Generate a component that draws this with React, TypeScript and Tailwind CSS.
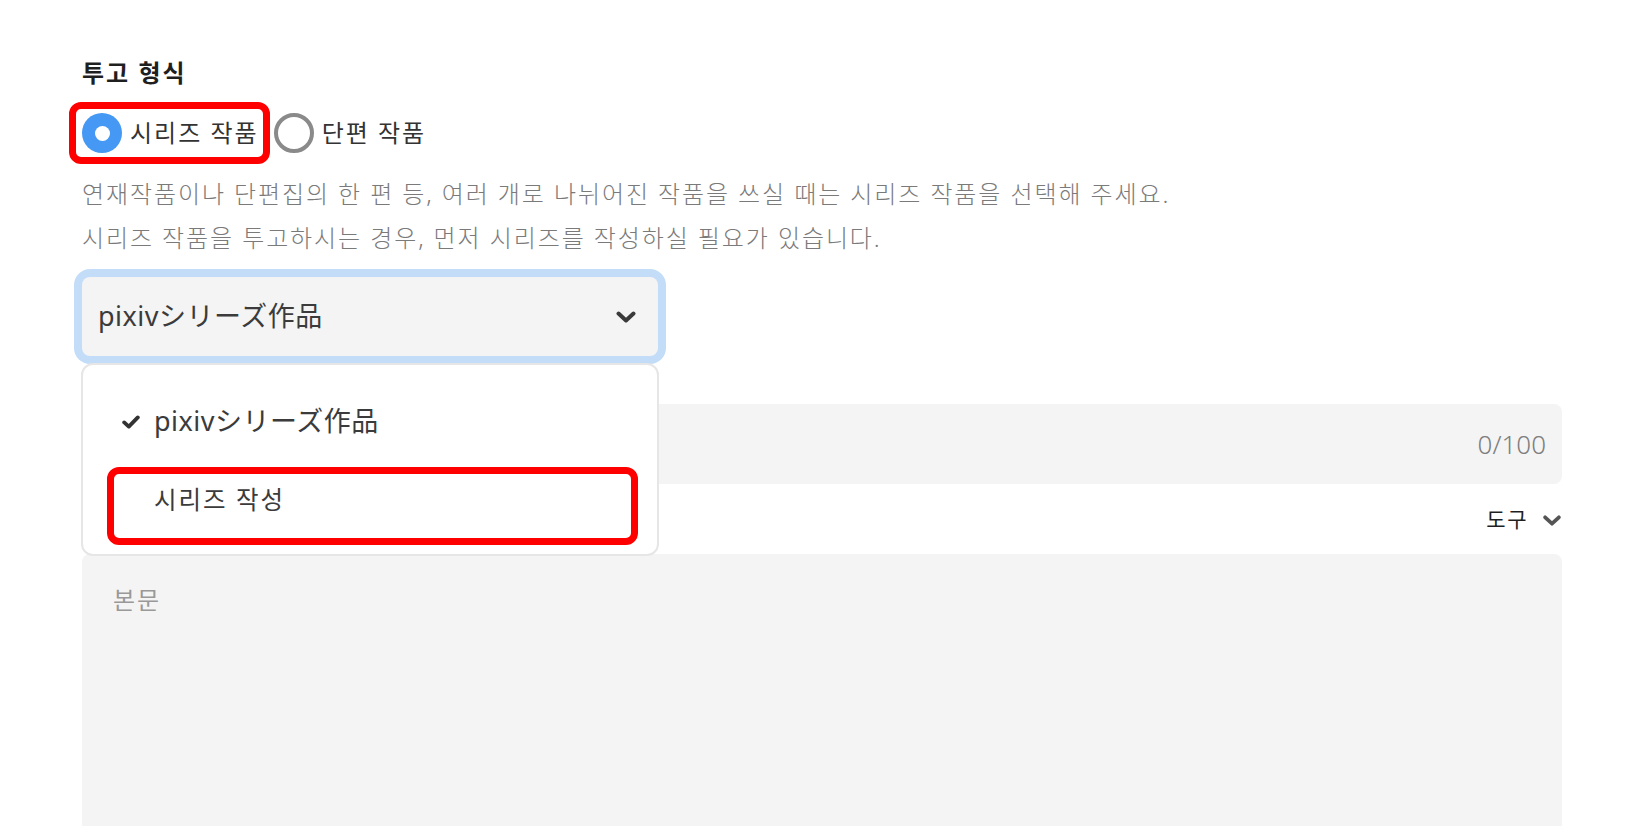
import type { ReactNode } from 'react'

const font = "font-['Noto_Sans','Noto_Sans_CJK_KR','Noto_Sans_CJK_JP',sans-serif]"
const jpFont = "font-['Noto_Sans','Noto_Sans_CJK_JP','Noto_Sans_CJK_KR',sans-serif]"

function Chevron({ className }: { className?: string }) {
  return (
    <svg viewBox="0 0 20 12" className={className} fill="none">
      <path d="M2.5 2.5 10 9.5l7.5-7" stroke="currentColor" strokeWidth="4" strokeLinecap="round" strokeLinejoin="round" />
    </svg>
  )
}

function CheckMark() {
  return (
    <svg viewBox="0 0 18 14" className="h-[14px] w-[18px] text-[#333]" fill="none">
      <path d="M2.2 7.4 6.8 11.6 15.8 2.4" stroke="currentColor" strokeWidth="3.8" strokeLinecap="round" strokeLinejoin="round" />
    </svg>
  )
}

function Highlight({ className }: { className: string }) {
  return <span className={`pointer-events-none absolute rounded-[12px] border-[7px] border-[#ff0000] ${className}`} />
}

function Radio({ checked, children }: { checked?: boolean; children: ReactNode }) {
  return (
    <label className="flex items-center gap-2">
      {checked ? (
        <span className="flex h-10 w-10 items-center justify-center rounded-full bg-[#4598f3]">
          <span className="h-[15px] w-[15px] rounded-full bg-white" />
        </span>
      ) : (
        <span className="h-10 w-10 rounded-full border-4 border-[#8a8a8a]" />
      )}
      <span className="text-[24px] leading-10 tracking-[2px] text-[#333]">{children}</span>
    </label>
  )
}

export default function App() {
  return (
    <div className={`${font} min-h-[826px] overflow-hidden bg-white pt-[57px] pl-[82px] pr-[84px]`}>
      <h2 className="text-[24px] font-bold leading-8 tracking-[2px] text-[#1f1f1f]">투고 형식</h2>

      <div className="mt-[24px] flex items-center gap-[15px]">
        <div className="relative">
          <Radio checked>시리즈 작품</Radio>
          <Highlight className="-left-[13px] -right-[11px] -inset-y-[11px]" />
        </div>
        <Radio>단편 작품</Radio>
      </div>

      <div className="mt-[19px] text-[24px] font-light leading-[44px] tracking-[1.9px] text-[#7a7a7a]">
        <p>연재작품이나 단편집의 한 편 등, 여러 개로 나뉘어진 작품을 쓰실 때는 시리즈 작품을 선택해 주세요.</p>
        <p>시리즈 작품을 투고하시는 경우, 먼저 시리즈를 작성하실 필요가 있습니다.</p>
      </div>

      <div className="relative mt-[17px] w-[576px]">
        <div className="flex h-[79px] items-center justify-between rounded-[8px] bg-[#f4f4f4] pl-4 pr-[22px] ring-8 ring-[#c3ddf9]">
          <span className={`${jpFont} text-[27px] tracking-[0.5px] text-[#3b3b3b]`}>pixivシリーズ作品</span>
          <Chevron className="h-[12px] w-[20px] text-[#3a3a3a]" />
        </div>

        <div className="absolute left-[-1px] top-[86px] z-10 h-[193px] w-[578px] rounded-[12px] border-2 border-[#e6e6e6] bg-white py-[17px]">
          <div className="flex h-[79px] items-center">
            <span className="ml-[39px] mr-[14px] flex">
              <CheckMark />
            </span>
            <span className={`${jpFont} text-[27px] tracking-[0.5px] text-[#3b3b3b]`}>pixivシリーズ作品</span>
          </div>
          <div className="flex h-[79px] items-center pl-[71px]">
            <span className="text-[24.5px] tracking-[2px] text-[#3b3b3b]">시리즈 작성</span>
          </div>
          <Highlight className="left-[24px] right-[19px] top-[102px] h-[78px]" />
        </div>
      </div>

      <div className="mt-[48px] flex h-[80px] items-center justify-end rounded-[8px] bg-[#f4f4f4] pr-4">
        <span className="text-[26px] font-light text-[#7e7e7e]">0/100</span>
      </div>

      <div className="mt-[16px] flex h-10 items-center justify-end gap-[14px]">
        <span className="text-[21px] tracking-[1.5px] text-[#1f1f1f]">도구</span>
        <Chevron className="h-[11px] w-[20px] text-[#555]" />
      </div>

      <div className="mt-[14px] h-[320px] rounded-[8px] bg-[#f4f4f4] pl-[31px] pt-[30px]">
        <span className="text-[24px] leading-8 tracking-[2px] text-[#999]">본문</span>
      </div>
    </div>
  )
}
